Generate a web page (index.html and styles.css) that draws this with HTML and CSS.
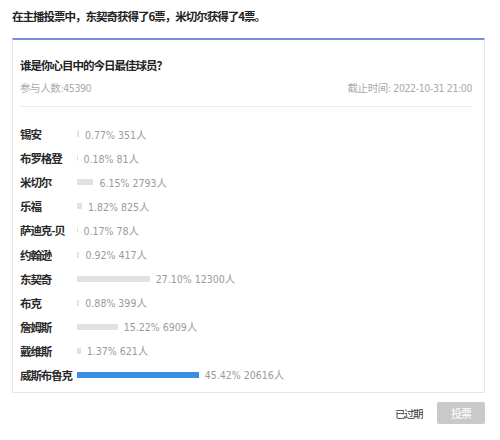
FILE: index.html
```html
<!DOCTYPE html>
<html lang="zh-CN">
<head>
    <meta charset="UTF-8">
    <meta name="viewport" content="width=device-width, initial-scale=1.0">
    <title>投票</title>
    <link rel="stylesheet" href="styles.css">
</head>
<body>
    <div class="page">
        <h1 class="headline">在主播投票中，东契奇获得了6票，米切尔获得了4票。</h1>

        <div class="vote-card">
            <div class="vote-head">
                <h2 class="vote-title">谁是你心目中的今日最佳球员？</h2>
                <div class="vote-meta">
                    <span class="meta-count">参与人数:45390</span>
                    <span class="meta-deadline">截止时间: 2022-10-31 21:00</span>
                </div>
            </div>

            <ul class="vote-list">
                <li class="vote-row"><span class="player">锡安</span><span class="bar" style="width: 2.06px"></span><span class="stat">0.77% 351人</span></li>
                <li class="vote-row"><span class="player">布罗格登</span><span class="bar" style="width: 0.48px"></span><span class="stat">0.18% 81人</span></li>
                <li class="vote-row"><span class="player">米切尔</span><span class="bar" style="width: 16.48px"></span><span class="stat">6.15% 2793人</span></li>
                <li class="vote-row"><span class="player">乐福</span><span class="bar" style="width: 4.88px"></span><span class="stat">1.82% 825人</span></li>
                <li class="vote-row"><span class="player">萨迪克-贝</span><span class="bar" style="width: 0.46px"></span><span class="stat">0.17% 78人</span></li>
                <li class="vote-row"><span class="player">约翰逊</span><span class="bar" style="width: 2.47px"></span><span class="stat">0.92% 417人</span></li>
                <li class="vote-row"><span class="player">东契奇</span><span class="bar" style="width: 72.63px"></span><span class="stat">27.10% 12300人</span></li>
                <li class="vote-row"><span class="player">布克</span><span class="bar" style="width: 2.36px"></span><span class="stat">0.88% 399人</span></li>
                <li class="vote-row"><span class="player">詹姆斯</span><span class="bar" style="width: 40.79px"></span><span class="stat">15.22% 6909人</span></li>
                <li class="vote-row"><span class="player">戴维斯</span><span class="bar" style="width: 3.67px"></span><span class="stat">1.37% 621人</span></li>
                <li class="vote-row"><span class="player">威斯布鲁克</span><span class="bar bar-top" style="width: 121.73px"></span><span class="stat">45.42% 20616人</span></li>
            </ul>
        </div>

        <div class="vote-footer">
            <span class="expired">已过期</span>
            <button class="btn-vote" disabled>投票</button>
        </div>
    </div>
</body>
</html>
```

FILE: styles.css
```css
:root {
    --blue: #6f95d8;
    --bar-blue: #3b8de0;
    --bar-gray: #e2e2e2;
    --text-dark: #222;
    --text-gray: #9a9a9a;
    --border: #e6e6e6;
}

* {
    margin: 0;
    padding: 0;
    box-sizing: border-box;
}

body {
    background: #fff;
    color: var(--text-dark);
    font-family: "Noto Sans CJK SC", "Liberation Sans", sans-serif;
}

.page {
    width: 500px;
    padding: 8px 15px 0 12px;
}

.headline {
    font-size: 11.5px;
    font-weight: 700;
    line-height: 16px;
    letter-spacing: -1px;
    margin-bottom: 14px;
}

.vote-card {
    border: 1px solid var(--border);
    border-top: 2px solid var(--blue);
    padding: 0 12px 5px 7px;
}

.vote-head {
    padding-top: 16px;
    padding-bottom: 10px;
    border-bottom: 1px solid #eee;
}

.vote-title {
    font-size: 11.5px;
    font-weight: 700;
    line-height: 18px;
    letter-spacing: -1px;
}

.vote-meta {
    display: flex;
    justify-content: space-between;
    margin-top: 6px;
    line-height: 16px;
    font-size: 10.5px;
    color: #aaa;
}

.meta-count,
.meta-deadline {
    font-family: "Liberation Sans Narrow", "DejaVu Sans Condensed", "Noto Sans CJK SC", sans-serif;
    font-stretch: condensed;
    letter-spacing: -0.4px;
}

.vote-list {
    list-style: none;
    margin-top: 15px;
}

.vote-row {
    display: flex;
    align-items: center;
    height: 24.1px;
}

.player {
    width: 57px;
    flex-shrink: 0;
    font-size: 11.5px;
    font-weight: 700;
    letter-spacing: -1.1px;
    color: #2a2a2a;
}

.bar {
    height: 6px;
    background: var(--bar-gray);
    margin-right: 6px;
    flex-shrink: 0;
}

.bar-top {
    background: var(--bar-blue);
}

.stat {
    font-family: "Liberation Sans Narrow", "DejaVu Sans Condensed", "Noto Sans CJK SC", sans-serif;
    font-stretch: condensed;
    font-size: 10.5px;
    color: var(--text-gray);
    white-space: nowrap;
}

.vote-footer {
    display: flex;
    justify-content: flex-end;
    align-items: center;
    gap: 15px;
    margin-top: 9px;
}

.expired {
    font-size: 10.5px;
    letter-spacing: -1.5px;
    color: #333;
}

.btn-vote {
    width: 48px;
    height: 22px;
    border: none;
    border-radius: 2px;
    background: #c9c9c9;
    color: #fff;
    font-family: "Noto Sans CJK SC", sans-serif;
    font-size: 11px;
    letter-spacing: -1px;
}
```
